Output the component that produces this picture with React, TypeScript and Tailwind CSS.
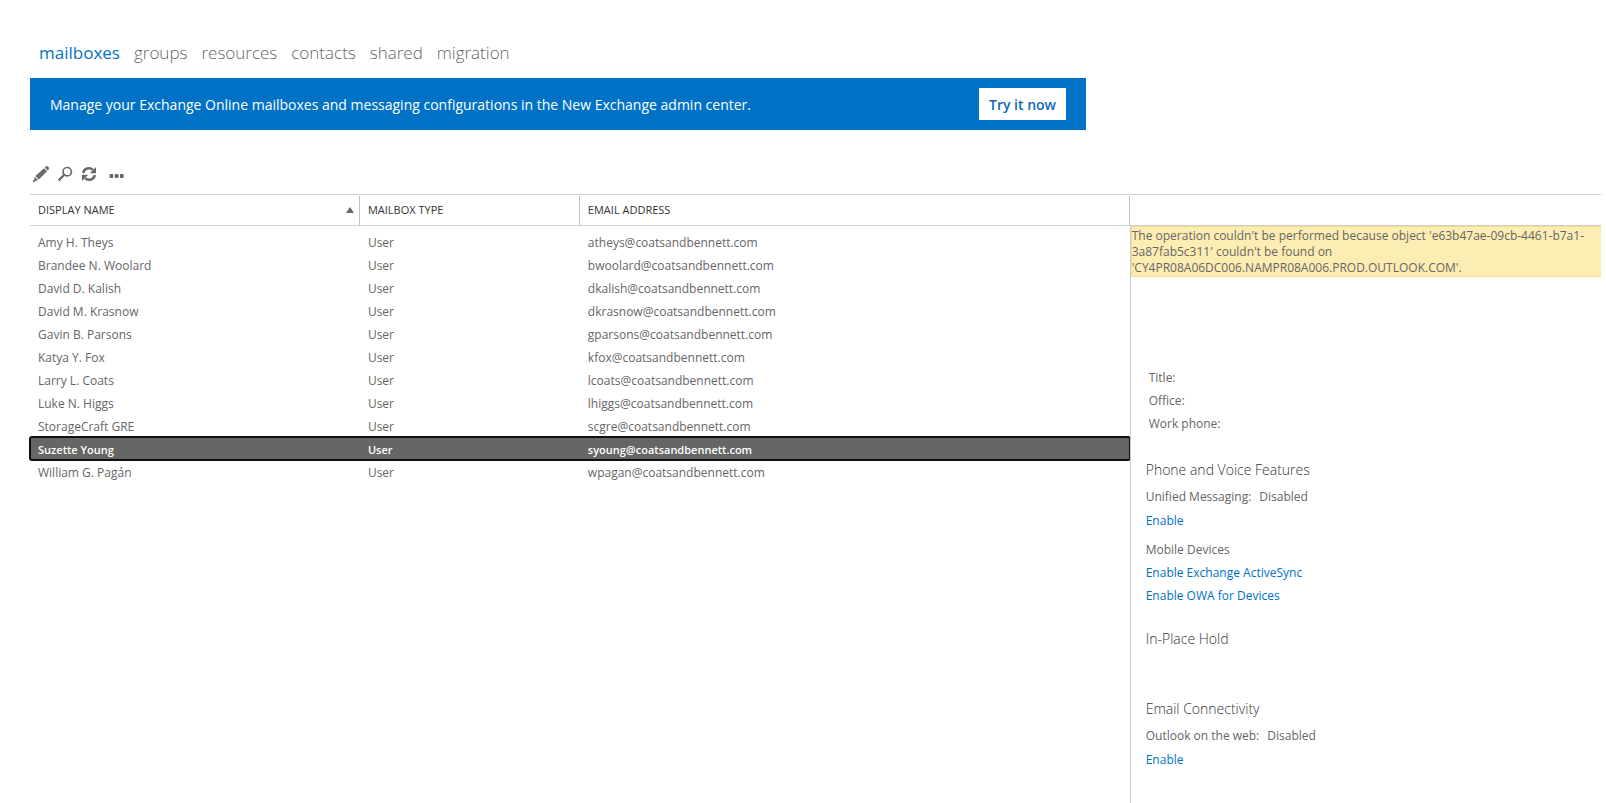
import React, { useState } from "react";
import clsx from "clsx";

const tabs = ["mailboxes", "groups", "resources", "contacts", "shared", "migration"];

const mailboxes = [
  { name: "Amy H. Theys", type: "User", email: "atheys@coatsandbennett.com" },
  { name: "Brandee N. Woolard", type: "User", email: "bwoolard@coatsandbennett.com" },
  { name: "David D. Kalish", type: "User", email: "dkalish@coatsandbennett.com" },
  { name: "David M. Krasnow", type: "User", email: "dkrasnow@coatsandbennett.com" },
  { name: "Gavin B. Parsons", type: "User", email: "gparsons@coatsandbennett.com" },
  { name: "Katya Y. Fox", type: "User", email: "kfox@coatsandbennett.com" },
  { name: "Larry L. Coats", type: "User", email: "lcoats@coatsandbennett.com" },
  { name: "Luke N. Higgs", type: "User", email: "lhiggs@coatsandbennett.com" },
  { name: "StorageCraft GRE", type: "User", email: "scgre@coatsandbennett.com" },
  { name: "Suzette Young", type: "User", email: "syoung@coatsandbennett.com" },
  { name: "William G. Pagán", type: "User", email: "wpagan@coatsandbennett.com" },
];

function Tabs() {
  const [active, setActive] = useState("mailboxes");

  return (
    <nav className="flex gap-[14px] pl-[9px] pt-[41px] text-[17px] leading-6 font-light">
      {tabs.map((tab) => (
        <a
          key={tab}
          href={`#${tab}`}
          onClick={() => setActive(tab)}
          className={clsx(tab === active ? "font-normal text-[#0072c6]" : "text-[#666]")}
        >
          {tab}
        </a>
      ))}
    </nav>
  );
}

function Banner() {
  return (
    <section className="mt-[13px] flex h-[52px] max-w-[1056px] items-center justify-between bg-[#0072c6] px-5">
      <p className="text-[14px] text-white">
        Manage your Exchange Online mailboxes and messaging configurations in the New Exchange admin center.
      </p>
      <button className="h-8 w-[87px] bg-white text-[14px] font-semibold text-[#0f67b8]">Try it now</button>
    </section>
  );
}

function Toolbar() {
  return (
    <div className="flex h-16 items-end gap-2 pb-3 pl-[3px] text-[#6a6a6a]">
      <button aria-label="Edit" className="size-4">
        <svg viewBox="0 0 16 16" className="size-4" fill="currentColor">
          <path d="M11.7 1.6 12.8.6a1.6 1.6 0 0 1 2.2 0l.6.6a1.6 1.6 0 0 1 0 2.2l-1 1.1z" />
          <path d="M11 2.3 14 5.3 5.8 13.5 2.4 10.1z" />
          <path d="M1.9 10.9 5 14 2 15.2.8 14z" />
          <path d="M0 14.2h1.8V16H0z" />
        </svg>
      </button>
      <button aria-label="Search" className="size-4">
        <svg viewBox="0 0 16 16" className="size-4" fill="none" stroke="currentColor">
          <circle cx="10.2" cy="5.7" r="4.2" strokeWidth="1.7" />
          <path d="M7.2 8.9 1.6 14.4" strokeWidth="2.2" />
        </svg>
      </button>
      <button aria-label="Refresh" className="size-4">
        <svg viewBox="0 0 16 16" className="size-4" fill="none" stroke="currentColor" strokeWidth="2.5">
          <path d="M2.2 7A5.7 5.7 0 0 1 12 4" />
          <path d="M13.8 9A5.7 5.7 0 0 1 4 12" />
          <path d="M15 1v6.2H8.8z" fill="currentColor" stroke="none" />
          <path d="M1 15V8.8h6.2z" fill="currentColor" stroke="none" />
        </svg>
      </button>
      <button aria-label="More" className="ml-1 size-4">
        <svg viewBox="0 0 16 16" className="size-4" fill="currentColor">
          <rect x="0.5" y="8" width="3.8" height="4" rx="1" />
          <rect x="5.7" y="8" width="3.8" height="4" rx="1" />
          <rect x="10.9" y="8" width="3.8" height="4" rx="1" />
        </svg>
      </button>
    </div>
  );
}

function MailboxTable() {
  const [selected, setSelected] = useState("Suzette Young");

  return (
    <table className="w-full table-fixed border-separate border-spacing-0 text-left">
      <colgroup>
        <col className="w-[30%]" />
        <col className="w-[20%]" />
        <col />
      </colgroup>
      <thead className="text-[11px] text-[#333]">
        <tr className="h-8">
          <th className="border-y border-[#c8d0d2] p-0 font-normal">
            <div className="flex h-[29px] items-center justify-between border-r border-[#bcc3c6] pl-2 pr-[5px]">
              DISPLAY NAME
              <svg viewBox="0 0 8 6" className="h-[6px] w-2" fill="#666">
                <path d="M4 0 8 6H0z" />
              </svg>
            </div>
          </th>
          <th className="border-y border-[#c8d0d2] p-0 font-normal">
            <div className="flex h-[29px] items-center border-r border-[#bcc3c6] pl-2">MAILBOX TYPE</div>
          </th>
          <th className="border-y border-[#c8d0d2] p-0 font-normal">
            <div className="flex h-[29px] items-center border-r border-[#bcc3c6] pl-2">EMAIL ADDRESS</div>
          </th>
        </tr>
      </thead>
      <tbody className="before:block before:h-1">
        {mailboxes.map((m) => (
          <tr
            key={m.email}
            onClick={() => setSelected(m.name)}
            className={clsx(
              "h-[23px]",
              m.name === selected && "rounded-[2px] bg-[#666] text-[11px] font-semibold text-white outline-2 -outline-offset-1 outline-[#101010]"
            )}
          >
            <td className="p-0 pl-2 pt-[3px]">{m.name}</td>
            <td className="p-0 pl-2 pt-[3px]">{m.type}</td>
            <td className="p-0 pl-2 pt-[3px]">{m.email}</td>
          </tr>
        ))}
      </tbody>
    </table>
  );
}

function ActionLink({ children }: { children: React.ReactNode }) {
  return (
    <a href="#" className="block leading-[23px] text-[#0072c6]">
      {children}
    </a>
  );
}

function DetailsPane() {
  return (
    <aside className="flex w-[30%] flex-col">
      <div className="h-8 border-y border-[#c8d0d2]" />
      <div className="flex-1 border-l border-[#c8d0d2]">
        <p className="border border-r-0 border-[#fdd985] bg-[#feedb2] pt-px pr-2 leading-4">
          The operation couldn't be performed because object 'e63b47ae-09cb-4461-b7a1-3a87fab5c311' couldn't be found on
          'CY4PR08A06DC006.NAMPR08A006.PROD.OUTLOOK.COM'.
        </p>
        <div className="pl-[15px] pt-[89px]">
          <div className="pl-[3px] leading-[23px]">
            <p>Title:</p>
            <p>Office:</p>
            <p>Work phone:</p>
          </div>

          <h2 className="mt-[23px] text-[14px] leading-6 font-light text-[#333]">Phone and Voice Features</h2>
          <p className="mt-[3px] flex gap-2 leading-6">
            <span>Unified Messaging:</span>
            <span>Disabled</span>
          </p>
          <ActionLink>Enable</ActionLink>
          <p className="mt-[6px] leading-[23px]">Mobile Devices</p>
          <ActionLink>Enable Exchange ActiveSync</ActionLink>
          <ActionLink>Enable OWA for Devices</ActionLink>

          <h2 className="mt-5 text-[14px] leading-6 font-light text-[#333]">In-Place Hold</h2>

          <h2 className="mt-[46px] text-[14px] leading-6 font-light text-[#333]">Email Connectivity</h2>
          <p className="mt-[3px] flex gap-2 leading-6">
            <span>Outlook on the web:</span>
            <span>Disabled</span>
          </p>
          <ActionLink>Enable</ActionLink>
        </div>
      </div>
    </aside>
  );
}

export default function App() {
  return (
    <div className="flex min-h-screen flex-col bg-white pl-[30px] pr-[5px] font-['Segoe_UI','Open_Sans',sans-serif] text-[12px] text-[#666]">
      <Tabs />
      <Banner />
      <Toolbar />
      <main className="flex flex-1">
        <div className="w-[70%]">
          <MailboxTable />
        </div>
        <DetailsPane />
      </main>
    </div>
  );
}
